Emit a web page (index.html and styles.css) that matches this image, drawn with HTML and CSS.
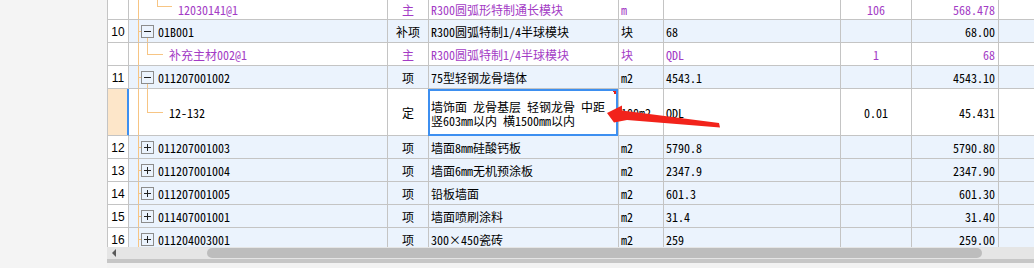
FILE: index.html
```html
<!DOCTYPE html>
<html lang="zh-CN">
<head>
<meta charset="utf-8">
<title>清单</title>
<link rel="stylesheet" href="styles.css">
</head>
<body>
<div class="page">
  <aside class="side"></aside>
  <main class="main">
    <div class="grid">
      <div class="row c r0">
        <div class="cell num"></div>
        <div class="cell tree t-c2"><span class="pu">12030141@1</span></div>
        <div class="cell type pu">主</div>
        <div class="cell name pu">R300圆弧形特制通长模块</div>
        <div class="cell unit pu">m</div>
        <div class="cell qty"></div>
        <div class="cell fac pu">106</div>
        <div class="cell amt pu">568.478</div>
        <div class="cell end"></div>
      </div>
      <div class="row p">
        <div class="cell num">10</div>
        <div class="cell tree t-open"><svg class="box" width="13" height="13" viewBox="0 0 13 13"><rect x="0.5" y="0.5" width="12" height="12" fill="none" stroke="#8c8c8c"/><path d="M3 6.5h7" stroke="#222"/></svg><span class="code">01B001</span></div>
        <div class="cell type">补项</div>
        <div class="cell name">R300圆弧特制1/4半球模块</div>
        <div class="cell unit">块</div>
        <div class="cell qty">68</div>
        <div class="cell fac"></div>
        <div class="cell amt">68.00</div>
        <div class="cell end"></div>
      </div>
      <div class="row c">
        <div class="cell num"></div>
        <div class="cell tree t-c"><span class="pu">补充主材002@1</span></div>
        <div class="cell type pu">主</div>
        <div class="cell name pu">R300圆弧特制1/4半球模块</div>
        <div class="cell unit pu">块</div>
        <div class="cell qty pu">QDL</div>
        <div class="cell fac pu">1</div>
        <div class="cell amt pu">68</div>
        <div class="cell end"></div>
      </div>
      <div class="row p">
        <div class="cell num">11</div>
        <div class="cell tree t-open"><svg class="box" width="13" height="13" viewBox="0 0 13 13"><rect x="0.5" y="0.5" width="12" height="12" fill="none" stroke="#8c8c8c"/><path d="M3 6.5h7" stroke="#222"/></svg><span class="code">011207001002</span></div>
        <div class="cell type">项</div>
        <div class="cell name">75型轻钢龙骨墙体</div>
        <div class="cell unit">m2</div>
        <div class="cell qty">4543.1</div>
        <div class="cell fac"></div>
        <div class="cell amt">4543.10</div>
        <div class="cell end"></div>
      </div>
      <div class="row c sel">
        <div class="cell num"></div>
        <div class="cell tree t-c"><span>12-132</span></div>
        <div class="cell type">定</div>
        <div class="cell name cur"><span class="ml">墙饰面 龙骨基层 轻钢龙骨 中距</span><span class="ml">竖603mm以内 横1500mm以内</span></div>
        <div class="cell unit">100m2</div>
        <div class="cell qty">QDL</div>
        <div class="cell fac">0.01</div>
        <div class="cell amt">45.431</div>
        <div class="cell end"></div>
      </div>
      <div class="row p">
        <div class="cell num">12</div>
        <div class="cell tree t-closed"><svg class="box" width="13" height="13" viewBox="0 0 13 13"><rect x="0.5" y="0.5" width="12" height="12" fill="none" stroke="#8c8c8c"/><path d="M3 6.5h7M6.5 3v7" stroke="#222"/></svg><span class="code">011207001003</span></div>
        <div class="cell type">项</div>
        <div class="cell name">墙面8mm硅酸钙板</div>
        <div class="cell unit">m2</div>
        <div class="cell qty">5790.8</div>
        <div class="cell fac"></div>
        <div class="cell amt">5790.80</div>
        <div class="cell end"></div>
      </div>
      <div class="row p">
        <div class="cell num">13</div>
        <div class="cell tree t-closed"><svg class="box" width="13" height="13" viewBox="0 0 13 13"><rect x="0.5" y="0.5" width="12" height="12" fill="none" stroke="#8c8c8c"/><path d="M3 6.5h7M6.5 3v7" stroke="#222"/></svg><span class="code">011207001004</span></div>
        <div class="cell type">项</div>
        <div class="cell name">墙面6mm无机预涂板</div>
        <div class="cell unit">m2</div>
        <div class="cell qty">2347.9</div>
        <div class="cell fac"></div>
        <div class="cell amt">2347.90</div>
        <div class="cell end"></div>
      </div>
      <div class="row p">
        <div class="cell num">14</div>
        <div class="cell tree t-closed"><svg class="box" width="13" height="13" viewBox="0 0 13 13"><rect x="0.5" y="0.5" width="12" height="12" fill="none" stroke="#8c8c8c"/><path d="M3 6.5h7M6.5 3v7" stroke="#222"/></svg><span class="code">011207001005</span></div>
        <div class="cell type">项</div>
        <div class="cell name">铅板墙面</div>
        <div class="cell unit">m2</div>
        <div class="cell qty">601.3</div>
        <div class="cell fac"></div>
        <div class="cell amt">601.30</div>
        <div class="cell end"></div>
      </div>
      <div class="row p">
        <div class="cell num">15</div>
        <div class="cell tree t-closed"><svg class="box" width="13" height="13" viewBox="0 0 13 13"><rect x="0.5" y="0.5" width="12" height="12" fill="none" stroke="#8c8c8c"/><path d="M3 6.5h7M6.5 3v7" stroke="#222"/></svg><span class="code">011407001001</span></div>
        <div class="cell type">项</div>
        <div class="cell name">墙面喷刷涂料</div>
        <div class="cell unit">m2</div>
        <div class="cell qty">31.4</div>
        <div class="cell fac"></div>
        <div class="cell amt">31.40</div>
        <div class="cell end"></div>
      </div>
      <div class="row p">
        <div class="cell num">16</div>
        <div class="cell tree t-closed"><svg class="box" width="13" height="13" viewBox="0 0 13 13"><rect x="0.5" y="0.5" width="12" height="12" fill="none" stroke="#8c8c8c"/><path d="M3 6.5h7M6.5 3v7" stroke="#222"/></svg><span class="code">011204003001</span></div>
        <div class="cell type">项</div>
        <div class="cell name">300×450瓷砖</div>
        <div class="cell unit">m2</div>
        <div class="cell qty">259</div>
        <div class="cell fac"></div>
        <div class="cell amt">259.00</div>
        <div class="cell end"></div>
      </div>
    </div>
    <div class="hscroll"><span class="sarrow"></span><span class="thumb"></span></div>
    <div class="hline"></div>
  </main>
  <svg class="annot" width="1034" height="268" viewBox="0 0 1034 268"><polygon points="607,113 622,105.5 622,110.5 719,123 720,127.5 627,120 614,122.5" fill="#f2231b"/></svg>
</div>
</body>
</html>
```

FILE: styles.css
```css
* { box-sizing: border-box; }
html, body { margin: 0; padding: 0; }
body { width: 1034px; height: 268px; overflow: hidden; background: #f4f4f4; }

.page { position: relative; display: flex; height: 268px; }
.side { width: 107px; flex: none; background: #f4f4f4; }
.main { flex: 1; min-width: 0; display: flex; flex-direction: column; background: #f2f2f2; }

.grid { height: 247px; flex: none; overflow: hidden; background: #fff; }
.row {
  display: grid;
  grid-template-columns: 21px 259px 41px 190px 45px 177px 71px 87px 1fr;
  height: 23px;
}
.row.r0 { height: 20px; }
.row.sel { height: 47px; }

.cell {
  border-left: 1px solid #c4c4c4;
  border-bottom: 1px solid #c4c4c4;
  display: flex;
  align-items: center;
  padding: 1px 2px 0;
  white-space: nowrap;
  overflow: hidden;
  font-family: "Noto Sans CJK SC", sans-serif;
  font-size: 12px;
  line-height: 14px;
  font-feature-settings: "hwid";
  color: #000;
}
.p .cell { background-color: #ebf3fd; }
.p .cell.num { background-color: #fff; }

.num { justify-content: center; padding: 1px 0 0; font-family: "Liberation Sans", sans-serif; font-feature-settings: normal; background: #fff; }
.sel .num { background: #fde6c9; box-shadow: inset -1px 0 #3d8ff0; }

.type, .fac { justify-content: center; }
.amt { justify-content: flex-end; padding-right: 3px; }
.pu { color: #a33bc5; }

.tree {
  --g: linear-gradient(#f7c584, #f7c584);
  background-image: var(--g);
  background-repeat: no-repeat;
  background-position: 9px 0;
  background-size: 1px 100%;
}
.sel .tree { border-left-color: #3d8ff0; }

.t-open {
  padding-left: 12px;
  background-image: var(--g), var(--g), var(--g);
  background-position: 9px 0, 9px 50%, 18px 100%;
  background-size: 1px 100%, 3px 1px, 1px 4px;
}
.t-closed {
  padding-left: 12px;
  background-image: var(--g), var(--g);
  background-position: 9px 0, 9px 50%;
  background-size: 1px 100%, 3px 1px;
}
.t-c {
  padding-left: 40px;
  background-image: var(--g), var(--g), var(--g);
  background-position: 9px 0, 18px 0, 18px 50%;
  background-size: 1px 100%, 1px 50%, 16px 1px;
}
.t-c2 {
  padding-left: 49px;
  background-image: var(--g), var(--g), var(--g);
  background-position: 9px 0, 28px 0, 28px 6px;
  background-size: 1px 100%, 1px 6px, 15px 1px;
}
.box { flex: none; display: block; }
.code { margin-left: 4px; }

.name.cur {
  flex-direction: column;
  align-items: flex-start;
  justify-content: center;
  padding-top: 4px;
  outline: 2px solid #3d8ff0;
  outline-offset: -2px;
  background-image: linear-gradient(225deg, #e8221a 50%, transparent 50%);
  background-repeat: no-repeat;
  background-position: right 1px top 1px;
  background-size: 6px 6px;
}
.ml { display: block; height: 14px; }

.hscroll { height: 12px; flex: none; background: #e5e5e5; display: flex; align-items: center; }
.sarrow {
  width: 0; height: 0; margin-left: 5px;
  border-right: 4px solid #5a5a5a;
  border-top: 4px solid transparent;
  border-bottom: 4px solid transparent;
}
.thumb { margin-left: 91px; width: 775px; height: 10px; border-radius: 5px; background: #bdbdbd; }
.hline { height: 4px; flex: none; background: #c6c6c6; }

.annot { position: absolute; left: 0; top: 0; pointer-events: none; }
```
